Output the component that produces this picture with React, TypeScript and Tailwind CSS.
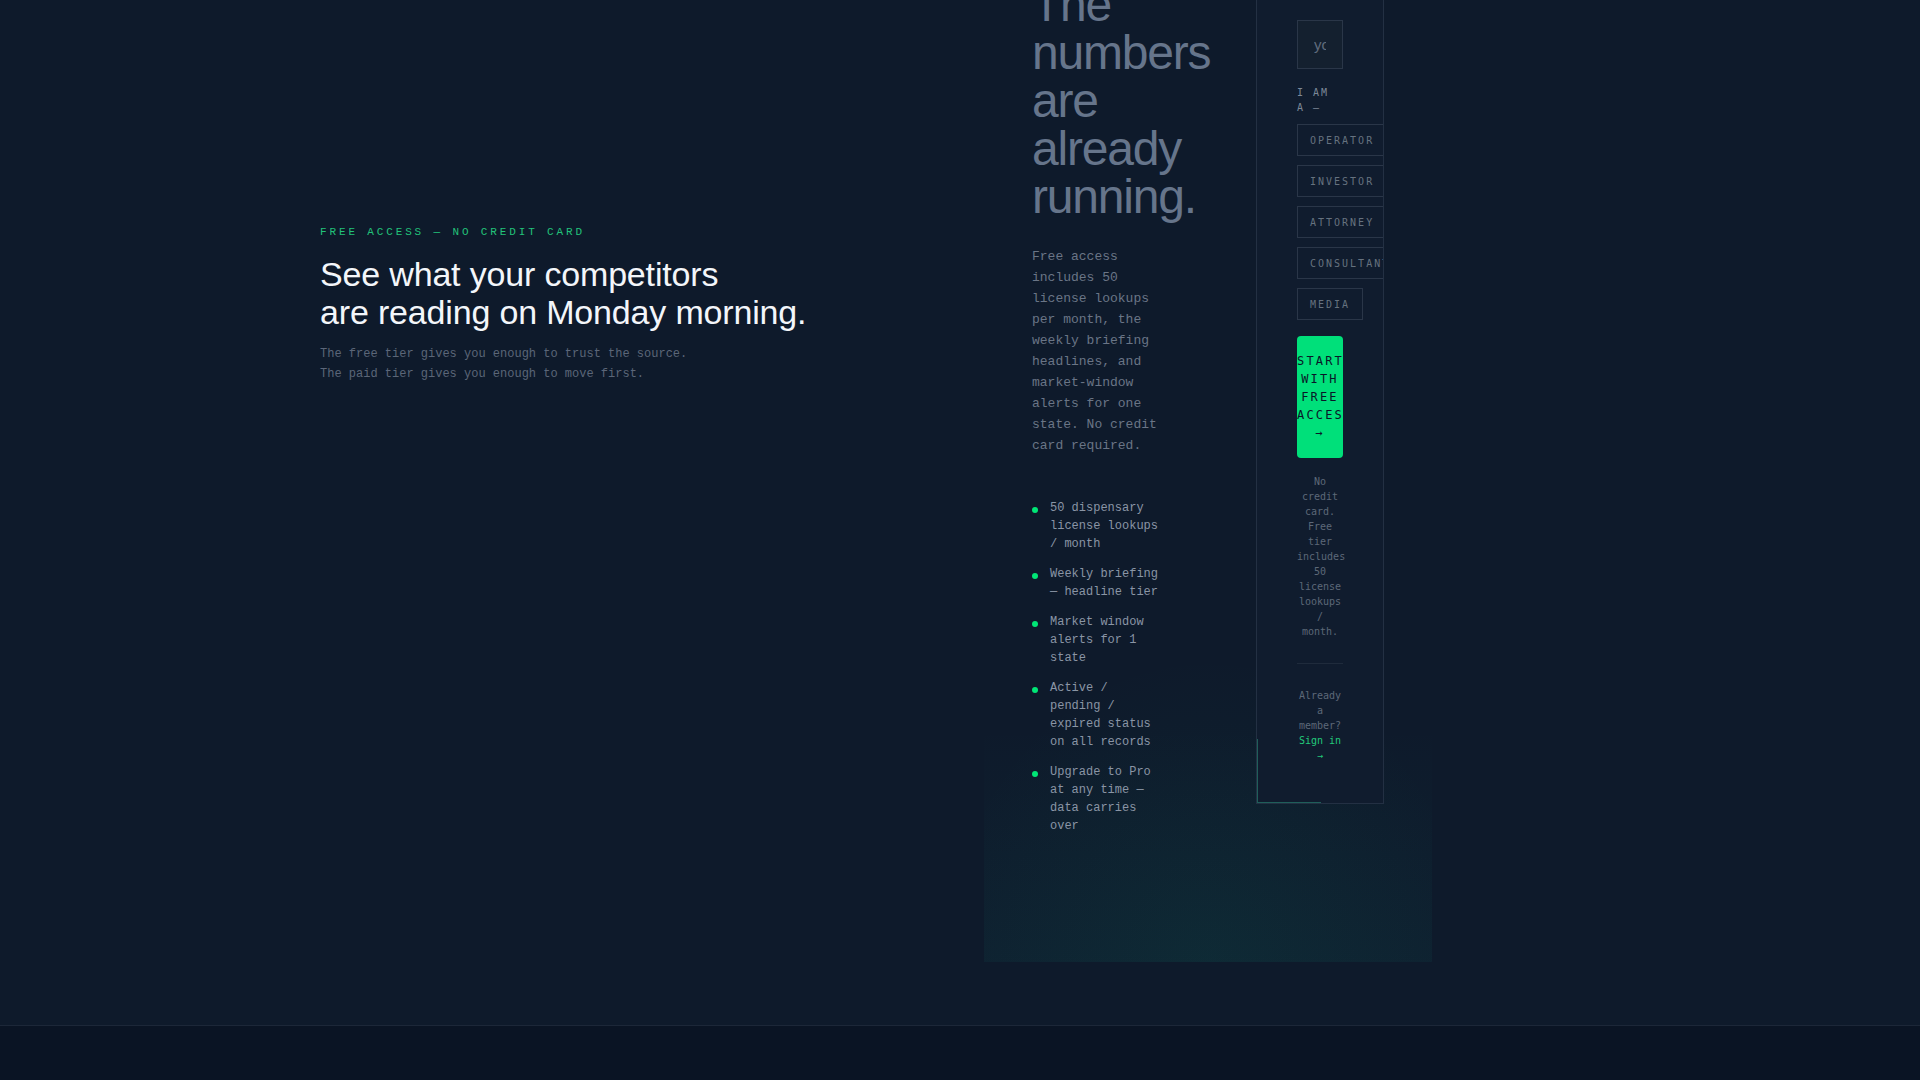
import React from 'react';

const roles = ['Operator', 'Investor', 'Attorney', 'Consultant', 'Media'];

const perks = [
  '50 dispensary license lookups / month',
  'Weekly briefing — headline tier',
  'Market window alerts for 1 state',
  'Active / pending / expired status on all records',
  'Upgrade to Pro at any time — data carries over',
];

const mono = "font-['Liberation_Mono','DejaVu_Sans_Mono',monospace]";
const cardMono = "font-['DejaVu_Sans_Mono','Liberation_Mono',monospace]";
const sans = "font-['Liberation_Sans',Arial,sans-serif]";

export default function App() {
  return (
    <div className="min-h-screen bg-[#0e1a2b]">
      {/* Signup section */}
      <section className="h-[1025px] overflow-hidden">
        <div className="mx-auto -mt-[68px] flex w-[1280px] items-start">
          {/* Left intro */}
          <div className="w-[664px] pt-[292px]">
            <p className={`${mono} text-[11px] leading-4 uppercase tracking-[0.26em] text-[#22c27a]`}>
              Free access — no credit card
            </p>
            <h2 className={`${sans} mt-[15px] text-[34px] leading-[38px] tracking-[-0.005em] text-[#f3f6fa]`}>
              See what your competitors
              <br />
              are reading on Monday morning.
            </h2>
            <p className={`${mono} mt-[13px] text-[12px] leading-5 text-[#5b6678]`}>
              The free tier gives you enough to trust the source.
              <br />
              The paid tier gives you enough to move first.
            </p>
          </div>

          {/* Right panel */}
          <div className="relative h-[1030px] w-[448px] bg-[linear-gradient(to_top,rgba(20,170,150,0.05),transparent_23%)] p-12">
            <div className="pointer-events-none absolute inset-0 bg-[radial-gradient(ellipse_60%_30%_at_50%_100%,rgba(16,185,129,0.06),transparent)]" />
            <div className="relative grid grid-cols-2 items-start gap-24">
              {/* Copy column */}
              <div className="pt-px">
                <h3 className={`${sans} text-5xl leading-none tracking-tight text-[#66758b]`}>
                  The numbers are already running.
                </h3>
                <p className={`${mono} mt-[25px] text-[13px] leading-[21px] text-[#6a7586]`}>
                  Free access includes 50 license lookups per month, the weekly briefing headlines, and
                  market-window alerts for one state. No credit card required.
                </p>
                <ul className="mt-[43px] flex flex-col gap-3">
                  {perks.map((p) => (
                    <li key={p} className="flex items-start">
                      <span className="mt-[8px] h-[6px] w-[6px] shrink-0 rounded-full bg-[#00e676]" />
                      <span className={`${mono} ml-3 text-[12px] leading-[18px] text-[#8a95a5]`}>{p}</span>
                    </li>
                  ))}
                </ul>
              </div>

              {/* Signup card */}
              <div className="relative -mt-px overflow-hidden border border-[#233043] bg-[#101c2e] p-10">
                <div className="pointer-events-none absolute bottom-0 left-0 h-16 w-16 border-b border-l border-[#1f5f5a]" />
                <input
                  type="email"
                  placeholder="you@company.com"
                  className={`${sans} block h-[49px] w-full border border-[#2a3648] bg-[#14202f] px-4 text-[15px] text-[#cbd5e1] outline-none placeholder:text-[#5f6b7c]`}
                />
                <p className={`${cardMono} mt-4 text-[10px] leading-[15px] uppercase tracking-[0.2em] text-[#7d8898]`}>
                  I am a —
                </p>
                <div className="mt-[9px] flex flex-col items-start gap-[9px]">
                  {roles.map((r) => (
                    <button
                      key={r}
                      className={`${cardMono} flex h-8 shrink-0 items-center whitespace-nowrap border border-[#2a3648] px-3 text-[10px] uppercase tracking-[0.2em] text-[#66727f]`}
                    >
                      {r}
                    </button>
                  ))}
                </div>
                <button
                  className={`${cardMono} mt-4 block w-full overflow-hidden rounded-sm bg-[#00e07a] py-4 text-center text-[12px] leading-[18px] uppercase tracking-[0.18em] text-[#0a1628]`}
                >
                  Start with free access →
                </button>
                <p className={`${cardMono} mt-4 text-center text-[10px] leading-[15px] text-[#5d6878]`}>
                  No credit card. Free tier includes 50 license lookups / month.
                </p>
                <div className="mt-6 h-px bg-[#1f2b3c]" />
                <p className={`${cardMono} mt-6 text-center text-[10px] leading-[15px] text-[#5d6878]`}>
                  Already a member? <a className="text-[#22c97a]">Sign in →</a>
                </p>
              </div>
            </div>
          </div>
        </div>
      </section>

      {/* Footer strip */}
      <footer className="h-[55px] border-t border-[#1c2738] bg-[#0a1424]" />
    </div>
  );
}
